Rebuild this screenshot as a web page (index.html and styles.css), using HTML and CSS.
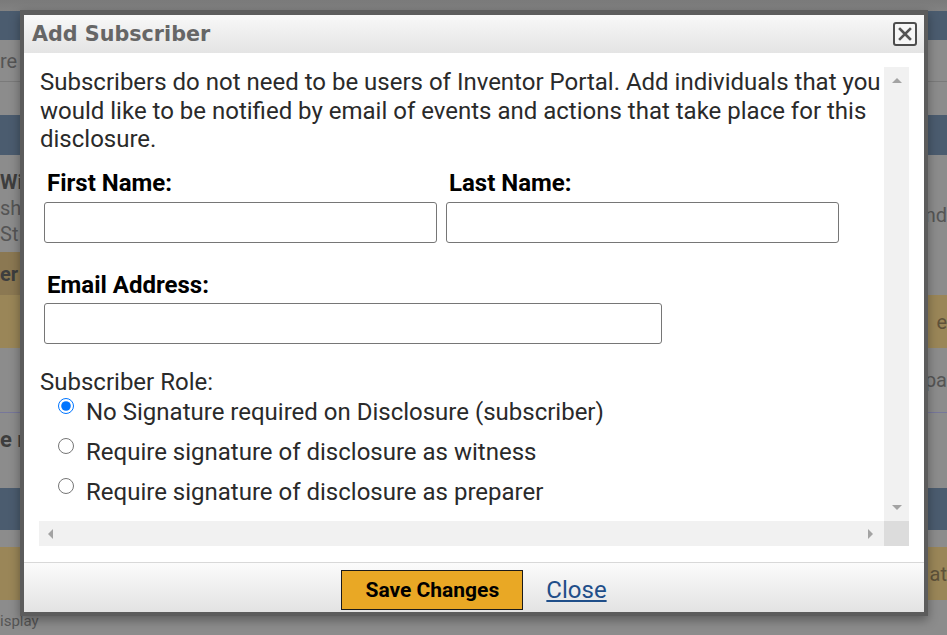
FILE: index.html
```html
<!DOCTYPE html>
<html lang="en">
<head>
<meta charset="utf-8">
<title>Add Subscriber</title>
<link rel="stylesheet" href="styles.css">
</head>
<body>
<div class="page">
  <div class="band b-top"></div>
  <div class="band b-blue b-h28"></div>
  <div class="band b-gray b-h42 b-line"><span>re</span><span></span></div>
  <div class="band b-gray b-h33"></div>
  <div class="band b-blue b-h40"></div>
  <div class="band b-gray b-stack">
    <div class="stack-left"><span class="strong">Wi</span><span>sh</span><span>St</span></div>
    <span class="right-txt">nd</span>
  </div>
  <div class="band b-gray b-h43"><span class="gold-tab strong">er</span><span></span></div>
  <div class="band b-gold b-h53"><span></span><span class="right-txt">e</span></div>
  <div class="band b-gray b-h64"><span></span><span class="right-txt">pa</span></div>
  <div class="band b-gray b-h53 b-lav"><span class="strong big">e r</span><span></span></div>
  <div class="band b-gray b-h23"></div>
  <div class="band b-blue b-h42"></div>
  <div class="band b-gray b-h17"></div>
  <div class="band b-gold b-h53"><span></span><span class="right-txt">at</span></div>
  <div class="band b-gray b-h30 b-end"><span class="small">isplay</span><span></span></div>
</div>

<div class="dialog" role="dialog" aria-labelledby="dlg-title">
  <div class="titlebar">
    <span class="title" id="dlg-title">Add Subscriber</span>
    <button class="close-btn" type="button" aria-label="Close">
      <svg width="16" height="16" viewBox="0 0 16 16"><path d="M3 3 L13 13 M13 3 L3 13" stroke="#555" stroke-width="2.6" stroke-linecap="square" fill="none"/></svg>
    </button>
  </div>
  <div class="content">
    <div class="scroller">
      <div class="scroll-body">
        <p class="intro">Subscribers do not need to be users of Inventor Portal. Add individuals that you would like to be notified by email of events and actions that take place for this disclosure.</p>
        <div class="fields">
          <div class="field"><label for="fn">First Name:</label><input id="fn" type="text"></div>
          <div class="field"><label for="ln">Last Name:</label><input id="ln" type="text"></div>
          <div class="field field-wide"><label for="em">Email Address:</label><input id="em" type="text"></div>
        </div>
        <div class="role">
          <div class="role-title">Subscriber Role:</div>
          <div class="radio-list">
            <label class="radio-row"><input type="radio" name="role" checked><span>No Signature required on Disclosure (subscriber)</span></label>
            <label class="radio-row"><input type="radio" name="role"><span>Require signature of disclosure as witness</span></label>
            <label class="radio-row"><input type="radio" name="role"><span>Require signature of disclosure as preparer</span></label>
          </div>
        </div>
      </div>
      <div class="vbar"><span class="arr arr-up"></span><span class="arr arr-down"></span></div>
      <div class="hbar"><span class="arr arr-left"></span><span class="arr arr-right"></span></div>
      <div class="corner"></div>
    </div>
  </div>
  <div class="footer">
    <button class="save" type="button">Save Changes</button>
    <a class="close-link" href="#">Close</a>
  </div>
</div>
</body>
</html>
```
FILE: styles.css
```css
* { box-sizing: border-box; }
html, body { margin: 0; padding: 0; }
body {
  width: 947px;
  height: 635px;
  overflow: hidden;
  position: relative;
  background: #8c8c8c;
  font-family: Roboto, "Noto Sans", Arial, sans-serif;
}

/* dimmed page behind the modal */
.page { display: flex; flex-direction: column; }
.band {
  display: flex;
  justify-content: space-between;
  align-items: center;
  color: #555;
  font-size: 20px;
  overflow: hidden;
}
.b-top { height: 11px; background: linear-gradient(#7a7a7a, #828282); }
.b-blue { background: #4b5c6f; }
.b-gray { background: #8c8c8c; }
.b-gold { background: #9a8658; color: #5e523a; }
.b-line { border-bottom: 1px solid #7a7a7a; }
.b-lav { border-top: 1px solid #77779a; }
.b-h17 { height: 17px; }
.b-h23 { height: 23px; }
.b-h28 { height: 29px; }
.b-h30 { height: 30px; }
.b-h33 { height: 33px; }
.b-h40 { height: 40px; }
.b-h42 { height: 42px; }
.b-h43 { height: 43px; }
.b-h53 { height: 53px; }
.b-h64 { height: 64px; }
.b-stack { height: 97px; align-items: flex-start; }
.stack-left { display: flex; flex-direction: column; padding-top: 14px; line-height: 26px; }
.strong { font-weight: bold; color: #3e3e3e; }
.big { font-size: 22px; }
.b-end { align-items: flex-start; }
.small { font-size: 15px; padding-top: 12px; }
.b-stack .right-txt { padding-top: 48px; }
.gold-tab {
  align-self: stretch;
  display: flex;
  align-items: center;
  width: 40px;
  background: #8b7852;
}

/* modal dialog */
.dialog {
  position: absolute;
  left: 20px;
  top: 10px;
  width: 908px;
  height: 606px;
  border: 4px solid #5c5c5c;
  border-top-width: 5px;
  background: #fff;
  display: flex;
  flex-direction: column;
  box-shadow: 0 4px 10px rgba(0, 0, 0, 0.35);
}
.titlebar {
  flex: none;
  height: 38px;
  display: flex;
  align-items: center;
  justify-content: space-between;
  padding: 0 7px 0 8px;
  background: linear-gradient(#f8f8f8, #e4e4e4);
}
.title {
  font-family: "DejaVu Sans", Verdana, sans-serif;
  font-weight: bold;
  font-size: 20.7px;
  color: #666;
}
.close-btn {
  width: 24px;
  height: 24px;
  padding: 0;
  border: 2px solid #4d4d4d;
  border-radius: 3px;
  background: #f6f6f6;
  display: flex;
  align-items: center;
  justify-content: center;
}

.content { flex: 1; padding: 14px 15px 16px; min-height: 0; }
.scroller {
  height: 100%;
  display: grid;
  grid-template-columns: 1fr 25px;
  grid-template-rows: 1fr 25px;
}
.scroll-body { padding: 1px 0 0 1px; overflow: hidden; }
.intro {
  margin: 0;
  font-size: 24px;
  line-height: 28.5px;
  color: #2a2a2a;
}
.fields {
  display: grid;
  grid-template-columns: 393px 393px;
  column-gap: 9px;
  row-gap: 28px;
  margin: 15px 0 0 4px;
}
.field label {
  display: block;
  margin: 0 0 5px 3px;
  font-weight: bold;
  font-size: 24px;
  line-height: 28px;
  color: #000;
}
.field input {
  display: block;
  width: 100%;
  height: 41px;
  border: 1px solid #767676;
  border-radius: 3px;
  background: #fff;
}
.field-wide { grid-column: 1 / -1; width: 618px; }
.field-wide label { margin-bottom: 4px; }

.role { margin-top: 24px; font-size: 24px; line-height: 28px; color: #2a2a2a; }
.radio-list { margin-top: 2px; }
.radio-row { display: flex; align-items: flex-start; height: 40px; }
.radio-row input {
  width: 16px;
  height: 16px;
  margin: 0 12px 0 18px;
  flex: none;
}

/* drawn scrollbars */
.vbar {
  background: #f1f1f1;
  display: flex;
  flex-direction: column;
  align-items: center;
  justify-content: space-between;
  padding: 11px 0;
}
.hbar {
  background: #f1f1f1;
  display: flex;
  align-items: center;
  justify-content: space-between;
  padding: 0 11px 0 9px;
}
.corner { background: #dcdcdc; }
.arr { width: 0; height: 0; border: 0 solid transparent; }
.arr-up { border-width: 0 5px 5px; border-bottom-color: #a3a3a3; }
.arr-down { border-width: 5px 5px 0; border-top-color: #a3a3a3; }
.arr-left { border-width: 5px 5px 5px 0; border-right-color: #a3a3a3; }
.arr-right { border-width: 5px 0 5px 5px; border-left-color: #a3a3a3; }

/* footer */
.footer {
  flex: none;
  height: 50px;
  border-top: 1px solid #d8d8d8;
  background: linear-gradient(#fbfbfb, #e3e3e3);
  display: flex;
  align-items: flex-start;
  justify-content: center;
  gap: 23px;
  padding-top: 7px;
}
.save {
  width: 182px;
  height: 40px;
  border: 1px solid #1a1a1a;
  border-radius: 0;
  background: #e9a825;
  color: #000;
  font-family: Roboto, Arial, sans-serif;
  font-weight: bold;
  font-size: 21px;
  padding: 0;
}
.close-link {
  font-size: 24px;
  line-height: 40px;
  color: #1f4e89;
  text-decoration: underline;
}
```
